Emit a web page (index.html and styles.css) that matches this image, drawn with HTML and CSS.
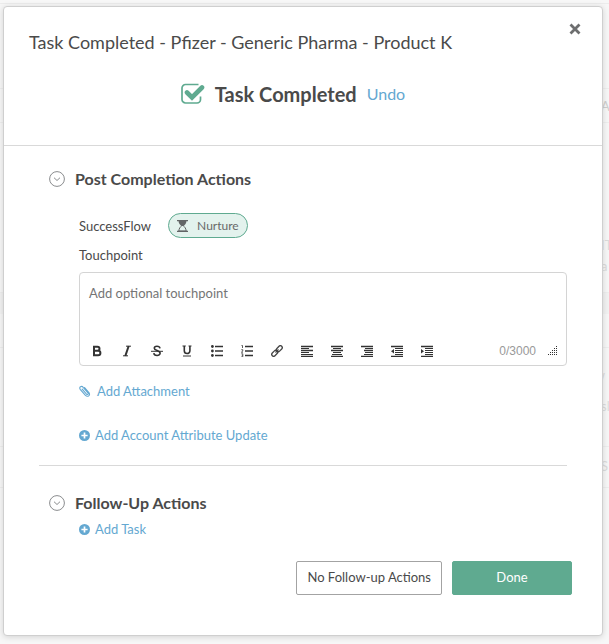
FILE: index.html
```html
<!DOCTYPE html>
<html lang="en">
<head>
    <meta charset="UTF-8">
    <meta name="viewport" content="width=device-width, initial-scale=1.0">
    <title>Task Completed</title>
    <link rel="stylesheet" href="styles.css">
</head>
<body>
    <div class="page-behind" aria-hidden="true">
        <span class="row-head">AC</span>
        <span>IT</span>
        <span>a</span>
        <span class="row-end">w</span>
        <span>sl</span>
        <span>S</span>
        <div class="rule rule-top"></div>
        <div class="rule rule-head"></div>
        <div class="band"></div>
        <div class="rule rule-row"></div>
        <div class="rule rule-next"></div>
    </div>

    <div class="modal" role="dialog" aria-labelledby="modalTitle">
        <button class="close" type="button" aria-label="Close">
            <svg width="12" height="12" viewBox="0 0 12 12"><path d="M1.5 1.5l9 9M10.5 1.5l-9 9" stroke="#6d6e6f" stroke-width="2.8"/></svg>
        </button>

        <div class="modal-header">
            <h1 id="modalTitle">Task Completed - Pfizer - Generic Pharma - Product K</h1>
            <div class="status">
                <svg width="24" height="22" viewBox="0 0 24 22">
                    <path d="M17.5 1.5h-13A3.5 3.5 0 0 0 1 5v11.500A3.500 3.500 0 0 0 4.500 20H16a3.500 3.500 0 0 0 3.500-3.500v-3" fill="none" stroke="#5faa90" stroke-width="1.7"/>
                    <path d="M6 9.500l5 5L21 4.500" fill="none" stroke="#5faa90" stroke-width="4.6" stroke-linecap="round"/>
                </svg>
                <h2>Task Completed</h2>
                <a class="undo" href="#">Undo</a>
            </div>
        </div>

        <div class="modal-body">
            <section class="section">
                <div class="section-title">
                    <button class="toggle" type="button" aria-label="Collapse post completion actions">
                        <svg width="16" height="16" viewBox="0 0 16 16" fill="none" stroke="#8a8c8e"><circle cx="8" cy="8" r="7.4"/><path d="M5 6.700l3 2.800 3-2.800"/></svg>
                    </button>
                    <h3>Post Completion Actions</h3>
                </div>
                <div class="section-content">
                    <div class="flow">
                        <span>SuccessFlow</span>
                        <button class="pill" type="button">
                            <svg width="11" height="12" viewBox="0 0 11 12"><path d="M0 .7h11M0 11.300h11" stroke="#626566" stroke-width="1.2"/><path d="M1.600 1h7.800c0 2.600-1.400 4-3.100 5H4.700C3 5 1.600 3.600 1.600 1z" fill="#626566"/><path d="M4.900 5.500C3.300 6.800 2 8.500 1.800 11h7.400C9 8.500 7.700 6.800 6.100 5.500" fill="none" stroke="#626566"/></svg>
                            Nurture
                        </button>
                    </div>
                    <label class="field-label" for="touchpoint">Touchpoint</label>
                    <div class="editor">
                        <textarea id="touchpoint" placeholder="Add optional touchpoint"></textarea>
                        <div class="toolbar">
                            <button type="button" aria-label="Bold"><svg viewBox="0 0 12 12"><path d="M3 1.700v8.600M2 1.700h4.500a2 2 0 0 1 0 4H3.500h3.600a2.300 2.300 0 0 1 0 4.600H2" fill="none" stroke="#333" stroke-width="2"/></svg></button>
                            <button type="button" aria-label="Italic"><svg viewBox="0 0 12 12"><path d="M5 1.200h5M2 10.800h5" stroke="#333"/><path d="M7.700 1L4.300 11" stroke="#333" stroke-width="2"/></svg></button>
                            <button type="button" aria-label="Strikethrough"><svg viewBox="0 0 12 12" fill="none" stroke="#333"><path d="M9 3.300C8.500.6 3.300.7 3.300 3.200c0 2.800 5.800 2 5.800 5 0 3-6 3-6.300-.1" stroke-width="1.6"/><path d="M0 6.300h12"/></svg></button>
                            <button type="button" aria-label="Underline"><svg viewBox="0 0 12 12" fill="none" stroke="#333"><path d="M3.300 1v4.800c0 3.600 5.600 3.600 5.600 0V1" stroke-width="1.6"/><path d="M1.500 1h3.300M7.500 1h3M2 11h8"/></svg></button>
                            <button type="button" aria-label="Bulleted list"><svg viewBox="0 0 12 12"><g fill="#333"><circle cx="1.4" cy="1.5" r="1.4"/><circle cx="1.4" cy="6" r="1.4"/><circle cx="1.4" cy="10.5" r="1.4"/></g><path d="M4 1.500h8M4 6h8M4 10.500h8" stroke="#333" stroke-width="1.4"/></svg></button>
                            <button type="button" aria-label="Numbered list"><svg viewBox="0 0 12 12" fill="none" stroke="#333"><path d="M4 1.500h8M4 6h8M4 10.500h8" stroke-width="1.4"/><path d="M.5.500h1v2.500M.3 4.700h1.500v1.200L.4 7.200h1.600M.3 8.800h1.500v3H.3M.8 10.300h1" stroke-width=".8"/></svg></button>
                            <button type="button" aria-label="Link"><svg viewBox="0 0 12 12" fill="none" stroke="#444" stroke-width="1.3"><rect x="-3.4" y="-1.9" width="6.8" height="3.8" rx="1.9" transform="translate(8.3 3.7) rotate(-45)"/><rect x="-3.4" y="-1.9" width="6.8" height="3.8" rx="1.9" transform="translate(3.7 8.3) rotate(-45)"/><path d="M4.500 7.500l3-3"/></svg></button>
                            <button type="button" aria-label="Align left"><svg viewBox="0 0 12 12"><path d="M0 1.500h12M0 5.500h12M0 11.500h12" stroke="#333" stroke-width="1.3"/><path d="M0 3.500h8M0 7.500h8M0 9.500h12" stroke="#333"/></svg></button>
                            <button type="button" aria-label="Align center"><svg viewBox="0 0 12 12"><path d="M0 1.500h12M0 5.500h12M0 11.500h12" stroke="#333" stroke-width="1.3"/><path d="M2 3.500h8M2 7.500h8M1 9.500h10" stroke="#333"/></svg></button>
                            <button type="button" aria-label="Align right"><svg viewBox="0 0 12 12"><path d="M0 1.500h12M3 5.500h9M0 11.500h12" stroke="#333" stroke-width="1.3"/><path d="M4 3.500h8M4 7.500h8M3 9.500h9" stroke="#333"/></svg></button>
                            <button type="button" aria-label="Outdent"><svg viewBox="0 0 12 12"><path d="M0 1.500h12M0 11.500h12" stroke="#333" stroke-width="1.3"/><path d="M4 3.500h8M4 5.500h8M4 7.500h8M4 9.500h8" stroke="#333"/><path d="M3 4v4.500L0 6.200z" fill="#333"/></svg></button>
                            <button type="button" aria-label="Indent"><svg viewBox="0 0 12 12"><path d="M0 1.500h12M0 11.500h12" stroke="#333" stroke-width="1.3"/><path d="M4 3.500h8M4 5.500h8M4 7.500h8M4 9.500h8" stroke="#333"/><path d="M0 4v4.500l3-2.300z" fill="#333"/></svg></button>
                            <span class="counter">0/3000</span>
                            <svg class="grip" viewBox="0 0 10 10"><path d="M8 .5h1M6 2.500h1m1 0h1M4 4.500h1m1 0h1m1 0h1M2 6.500h1m1 0h1m1 0h1m1 0h1M0 8.500h1m1 0h1m1 0h1m1 0h1m1 0h1" stroke="#333"/></svg>
                        </div>
                    </div>
                    <a class="action attachment" href="#">
                        <svg width="12" height="12" viewBox="0 0 12 12"><path d="M3.200 4.200l4.300 4.900c1 1 2.300 0 1.400-1.200L4.200 2.300C2.600.3-.4 2.200 1.200 4.300l5 5.800c2.500 2.600 5.700.2 3.700-2.500L5.600 2.500" fill="none" stroke="#64a8d1" stroke-width="1.1" stroke-linecap="round"/></svg>
                        Add Attachment
                    </a>
                    <a class="action" href="#">
                        <svg width="11" height="11" viewBox="0 0 11 11"><circle cx="5.5" cy="5.5" r="5.5" fill="#64a8d1"/><path d="M5.500 2.400v6.200M2.400 5.500h6.200" stroke="#fff" stroke-width="1.7"/></svg>
                        Add Account Attribute Update
                    </a>
                </div>
            </section>

            <section class="section follow-up">
                <div class="section-title">
                    <button class="toggle" type="button" aria-label="Collapse follow-up actions">
                        <svg width="16" height="16" viewBox="0 0 16 16" fill="none" stroke="#8a8c8e"><circle cx="8" cy="8" r="7.4"/><path d="M5 6.700l3 2.800 3-2.800"/></svg>
                    </button>
                    <h3>Follow-Up Actions</h3>
                </div>
                <div class="section-content">
                    <a class="action" href="#">
                        <svg width="11" height="11" viewBox="0 0 11 11"><circle cx="5.5" cy="5.5" r="5.5" fill="#64a8d1"/><path d="M5.500 2.400v6.200M2.400 5.500h6.200" stroke="#fff" stroke-width="1.7"/></svg>
                        Add Task
                    </a>
                </div>
            </section>
        </div>

        <div class="modal-footer">
            <button class="btn" type="button">No Follow-up Actions</button>
            <button class="btn btn-primary" type="button">Done</button>
        </div>
    </div>
</body>
</html>
```
FILE: styles.css
```css
* {
    box-sizing: border-box;
}
body {
    margin: 0;
    padding: 6px 6px 8px 3px;
    background: #f7f7f7;
    color: #4a4a4a;
    font-family: Lato, sans-serif;
    font-size: 13px;
    line-height: 20px;
}
h1, h2, h3 {
    margin: 0;
}
a {
    color: #64a8d1;
    text-decoration: none;
}
button {
    font: inherit;
    color: inherit;
    padding: 0;
    border: none;
    background: none;
    cursor: pointer;
}
svg {
    display: block;
    flex: none;
}
/* dimmed page under the dialog */
.page-behind {
    position: absolute;
    top: 3px;
    right: 0;
    bottom: 0;
    left: 0;
    overflow: hidden;
    border-top: 1px solid #ececec;
    color: #dcdcdc;
}
.page-behind span {
    position: absolute;
    left: calc(100% - 8px);
}
.page-behind .row-head {
    color: #cfcfcf;
}
.page-behind .row-end {
    left: auto;
    right: 4px;
}
.page-behind span:nth-child(1) { top: 92px; }
.page-behind span:nth-child(2) { top: 231px; }
.page-behind span:nth-child(3) { top: 252px; }
.page-behind span:nth-child(4) { top: 361px; }
.page-behind span:nth-child(5) { top: 392px; }
.page-behind span:nth-child(6) { top: 452px; }
.rule, .band {
    position: absolute;
    left: 0;
    right: 0;
    border-top: 1px solid #eeeeee;
}
.rule-top { top: 84px; }
.rule-head { top: 118px; }
.rule-row { top: 343px; }
.rule-next {
    top: 442px;
    height: 42px;
    border-bottom: 1px solid #eeeeee;
}
.band {
    top: 288px;
    height: 22px;
    background: #f2f2f2;
}
.modal {
    position: relative;
    background: #fff;
    border: 1px solid #cfcfcf;
    border-radius: 4px;
    box-shadow: 0 1px 6px rgba(0,0,0,0.15);
    padding-bottom: 40px;
}
.close {
    position: absolute;
    top: 16px;
    right: 21px;
}
.modal-header {
    padding: 23px 25px 38px;
    border-bottom: 1px solid #d9d9d9;
}
.modal-header h1 {
    font-size: 18px;
    font-weight: 400;
    line-height: 24px;
}
.status {
    display: flex;
    justify-content: center;
    align-items: center;
    gap: 10px;
    margin-top: 27px;
    padding-right: 20px;
}
.status h2 {
    font-size: 20px;
    line-height: 26px;
}
.undo {
    font-size: 16px;
}
.modal-body {
    padding: 22px 35px 0;
}
.section-title {
    display: flex;
    align-items: center;
    gap: 10px;
    padding-left: 10px;
}
.section-title h3 {
    font-size: 16px;
    line-height: 22px;
}
.section-content {
    padding-left: 40px;
}
.flow {
    display: flex;
    align-items: center;
    gap: 17px;
    margin-top: 23px;
}
.pill {
    display: flex;
    align-items: center;
    gap: 9px;
    height: 25px;
    padding: 0 8px;
    border: 1px solid #5faa90;
    border-radius: 13px;
    background: #e3f2ed;
    color: #68696a;
    font-size: 12px;
}
.field-label {
    display: block;
    margin: 7px 0;
}
.editor {
    border: 1px solid #d4d4d4;
    border-radius: 4px;
}
.editor textarea {
    display: block;
    width: 100%;
    height: 66px;
    padding: 10px 9px;
    border: none;
    outline: none;
    resize: none;
    background: none;
    font: inherit;
}
.editor textarea::placeholder {
    color: #757575;
}
.toolbar {
    display: flex;
    align-items: center;
    gap: 18px;
    height: 26px;
    padding: 0 8px 3px 11px;
}
.toolbar button svg {
    width: 12px;
    height: 12px;
}
.counter {
    margin-left: auto;
    color: #999;
    font-family: "Liberation Sans", sans-serif;
    font-size: 12px;
}
.toolbar .grip {
    width: 10px;
    height: 10px;
    margin-left: -6px;
}
.action {
    display: flex;
    align-items: center;
    gap: 5px;
    width: max-content;
}
.attachment {
    gap: 6px;
    margin: 15px 0 24px;
}
.follow-up {
    margin-top: 20px;
    padding-top: 26px;
    border-top: 1px solid #d9d9d9;
}
.follow-up .section-content {
    padding-top: 5px;
}
.modal-footer {
    display: flex;
    justify-content: flex-end;
    gap: 10px;
    margin-top: 22px;
    padding: 0 30px;
}
.btn {
    height: 34px;
    padding: 0 10px 2px;
    border: 1px solid #a3a3a3;
    border-radius: 2px;
}
.btn-primary {
    width: 120px;
    border-color: #5faa90;
    background: #5faa90;
    color: #fff;
}
```
